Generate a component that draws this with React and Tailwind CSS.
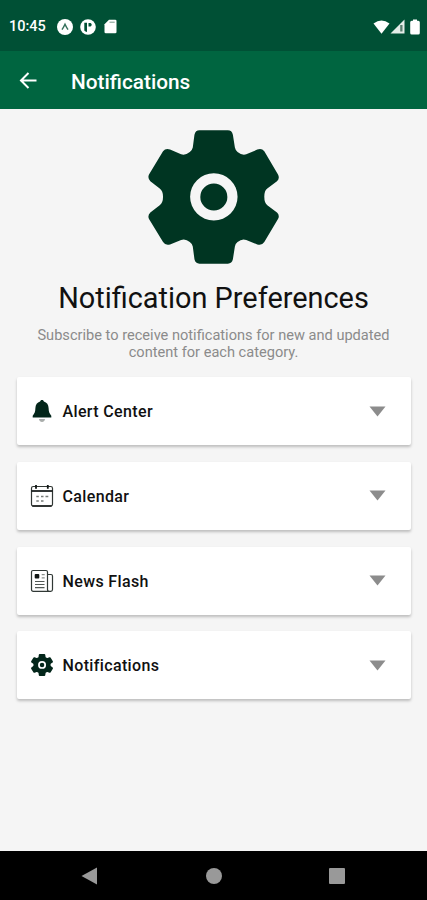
import { useState } from 'react'

function GearIcon({ className }) {
    return (
        <svg viewBox="44 43 392 403" preserveAspectRatio="none" className={className} fill="currentColor">
            <path
                fillRule="evenodd"
                d="M198 44H283Q295 44 298 57L304 96Q305 103 312 109Q325 120 338 116L371 102Q384 97 392 107L433 177Q439 188 430 197L401 219Q392 225 392 244Q392 263 401 269L430 291Q439 300 433 311L392 380Q384 392 371 387L338 374Q325 369 312 380Q305 385 304 393L298 432Q295 445 283 445H198Q186 445 183 432L178 393Q177 386 169 380Q156 369 143 374L110 387Q97 392 89 380L47 311Q42 300 51 291L79 269Q89 262 89 244Q89 226 79 219L51 197Q42 188 47 177L89 107Q97 97 110 102L143 116Q156 120 169 109Q177 103 178 96L183 57Q186 44 198 44ZM241 173a71 71 0 1 0 0 142a71 71 0 1 0 0-142ZM241 204a40.500 40.500 0 1 1 0 81a40.500 40.500 0 1 1 0-81Z"
            />
        </svg>
    )
}

function BellIcon() {
    return (
        <svg viewBox="0 0 24 24" className="w-6 h-6">
            <path d="M12 1c1.100 0 1.700.7 1.900 1.500c2.900.8 4.600 3.300 4.700 6.500c.1 3.900.8 5.300 2.700 7.700v1.800H2.700v-1.800c1.900-2.400 2.600-3.800 2.700-7.700c.1-3.200 1.800-5.700 4.700-6.500c.2-.8.8-1.500 1.900-1.500Z" fill="#03261a" />
            <path d="M8.900 20h6.200c-.4 1.900-1.600 2.900-3.100 2.900s-2.700-1-3.100-2.900Z" fill="#a9adab" />
        </svg>
    )
}

function CalendarIcon() {
    return (
        <svg viewBox="0 0 24 24" className="w-6 h-6" fill="none">
            <rect x="1.500" y="2.500" width="21" height="19.500" rx="1.800" stroke="#303633" strokeWidth="1.200" />
            <path d="M1.500 7h21" stroke="#101513" strokeWidth="1.700" />
            <path d="M6 1v3.700M17.800 1v3.700" stroke="#101513" strokeWidth="1.800" />
            <path d="M2.300 22h19.400" stroke="#101513" strokeWidth="1.500" />
            <path d="M6.300 12.500h2.500M11 12.500h2.500M15.500 12.500h2.800M6.300 17h2.500M11 17h2.500" stroke="#777c79" strokeWidth="1.400" />
        </svg>
    )
}

function NewsIcon() {
    return (
        <svg viewBox="0 0 24 24" className="w-6 h-6" fill="none" stroke="#303835" strokeWidth="1.200">
            <path d="M20.500 22.300H3.300Q1.500 22.300 1.500 20.500V3Q1.500 1.500 3 1.500H16Q17.500 1.500 17.500 3V20.500Q17.500 22.300 19.500 22.300H20.700Q22.500 22.300 22.500 20.500V7Q22.500 5.500 21 5.500H17.500" />
            <rect x="4.700" y="4.900" width="4.600" height="4.600" rx="1" fill="#101513" stroke="none" />
            <path d="M11.700 5.700h3M11.700 8.800h3" stroke="#8a908d" />
            <path d="M5 12.500h9.500M5 15.500h9.500M5 18.700h9.500" stroke="#515855" />
        </svg>
    )
}

const categories = [
    { name: 'Alert Center', icon: <BellIcon /> },
    { name: 'Calendar', icon: <CalendarIcon /> },
    { name: 'News Flash', icon: <NewsIcon /> },
    { name: 'Notifications', icon: <GearIcon className="w-[22px] h-[22px] mx-px text-[#03261a]" /> },
]

function StatusBar() {
    return (
        <div className="h-[51px] pl-[9px] pr-[7px] pt-[2px] flex items-center justify-between bg-[#005035] text-white">
            <div className="flex items-center">
                <span className="w-[48px] pt-px text-[14.500px] font-medium leading-none">10:45</span>
                <svg viewBox="0 0 16 16" className="w-4 h-4">
                    <circle cx="8" cy="8" r="8" fill="#fff" />
                    <path d="M5 10.600Q6.600 8.300 8 5.200Q9.400 8.300 11 10.600" fill="none" stroke="#35705b" strokeWidth="1.500" />
                </svg>
                <svg viewBox="0 0 16 16" className="w-4 h-4 ml-[7px]">
                    <circle cx="8" cy="8" r="7.800" fill="#fff" />
                    <path d="M4.300 3.800h2.700v9.200q-1.700-.3-2.700-1.500Z" fill="#005035" />
                    <path d="M8.500 4h2q1.200.5 1.200 1.800t-1.200 1.800H8.500Z" fill="#005035" />
                </svg>
                <svg viewBox="0 0 13 15" className="w-[13px] h-[15px] ml-[8px]" fill="#fff">
                    <path d="M5 .8h6.200q1.300 0 1.300 1.300v10.800q0 1.300-1.300 1.300H1.800Q.5 14.200.5 12.900V5.300Z" />
                    <path d="M5.500 3.200h5.200" stroke="#77988a" strokeWidth="1" />
                </svg>
            </div>
            <div className="flex items-center">
                <svg viewBox="0 0 17 14" className="w-[17px] h-[14px]" fill="#fff">
                    <path d="M.5 3.500Q8.500-2.500 16.500 3.500L8.500 13.800Z" />
                </svg>
                <svg viewBox="0 0 15 15" className="w-[15px] h-[15px]">
                    <path d="M.5 14.500L14.500.5V14.500Z" fill="#e4ece8" />
                    <path d="M10.200 6h2.300v6.500h-2.300Z" fill="#577d6d" />
                </svg>
                <svg viewBox="0 0 10 16" className="w-[10px] h-[16px] ml-[5px]" fill="#fff">
                    <path d="M3 .5h4v1.300h1.300q1.500 0 1.500 1.500v10.600q0 1.600-1.500 1.600H1.700q-1.500 0-1.500-1.600V3.300q0-1.500 1.500-1.500H3Z" />
                </svg>
            </div>
        </div>
    )
}

function CategoryCard({ name, icon }) {
    const [open, setOpen] = useState(false)

    return (
        <button
            onClick={() => setOpen(!open)}
            aria-expanded={open}
            className="w-full h-[68px] pl-[13px] pr-[25px] flex items-center bg-white rounded-[2px] shadow-[0_2px_3px_rgba(0,0,0,0.23)]"
        >
            {icon}
            <span className="ml-[9px] pt-[2px] text-[16px] leading-5 font-medium tracking-[0.36px] text-[#111]">{name}</span>
            <svg viewBox="0 0 17 11" className="w-[17px] h-[11px] ml-auto" fill="#8c8c8c">
                <path d="M.5.500h16L8.500 10.500Z" />
            </svg>
        </button>
    )
}

export default function App() {
    return (
        <div className="w-full h-[900px] flex flex-col overflow-hidden bg-[#f5f5f5] font-['Roboto','Liberation_Sans',sans-serif]">
            <StatusBar />
            <header className="h-[58px] pl-[19px] flex items-center bg-[#006540] text-white">
                <svg viewBox="0 0 18 18" className="w-[18px] h-[18px]" fill="none" stroke="#fff" strokeWidth="2">
                    <path d="M17.500 9.500H2M9.500 2L2 9.500L9.500 17" />
                </svg>
                <h1 className="ml-[34px] pt-[3px] text-[20.800px] leading-7 font-medium">Notifications</h1>
            </header>

            <main className="flex-1 px-4 flex flex-col items-center">
                <GearIcon className="mt-[21px] w-[131px] h-[134px] text-[#003522]" />
                <h2 className="mt-[16px] text-[28.900px] leading-[36px] text-[#111] whitespace-nowrap">Notification Preferences</h2>
                <p className="mt-[11px] text-[14.600px] leading-[17px] text-center text-[#8b8b8b] whitespace-nowrap">
                    Subscribe to receive notifications for new and updated
                    <br />
                    content for each category.
                </p>
                <div className="mt-[16px] w-[394px] flex flex-col gap-[16.800px]">
                    {categories.map((category) => (
                        <CategoryCard key={category.name} {...category} />
                    ))}
                </div>
            </main>

            <nav className="h-[49px] pl-[81px] pr-[82px] flex items-center justify-between bg-black">
                <svg viewBox="0 0 17 18" className="w-[17px] h-[18px]" fill="#999">
                    <path d="M.5 9L16 .5V17.500Z" />
                </svg>
                <div className="w-4 h-4 rounded-full bg-[#999]" />
                <div className="w-4 h-4 rounded-[1px] bg-[#999]" />
            </nav>
        </div>
    )
}
